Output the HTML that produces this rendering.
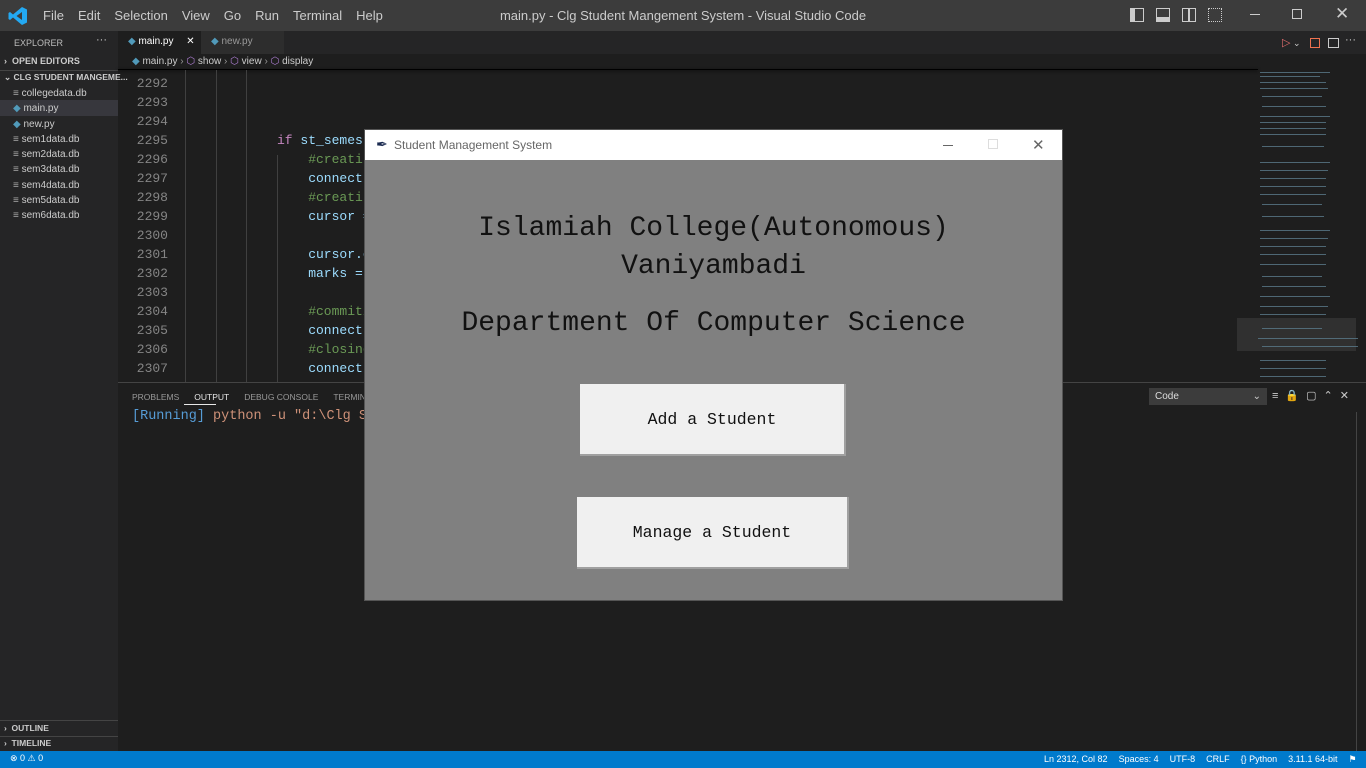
<!DOCTYPE html>
<html><head><meta charset="utf-8"><style>
*{margin:0;padding:0;box-sizing:border-box}
body{width:1366px;height:768px;overflow:hidden;background:#1e1e1e;font-family:"Liberation Sans",sans-serif;position:relative;color:#ccc}
.abs{position:absolute}
.mono{font-family:"Liberation Mono",monospace}
</style></head><body>
<!-- title bar -->
<div class="abs" style="left:0;top:0;width:1366px;height:31px;background:#3c3c3c"></div>
<svg class="abs" style="left:8px;top:6px" width="20" height="20" viewBox="0 0 20 20"><path d="M14 1 L19 3.5 V16.5 L14 19 L5 11.5 L2 14 L0.5 13 V7 L2 6 L5 8.5 Z M14 6 L8.5 10 L14 14 Z" fill="#23a9f2"/></svg>
<div class="abs" style="left:43px;top:8px;font-size:13px;color:#ccc;word-spacing:0"><span style="margin-right:14px">File</span><span style="margin-right:14px">Edit</span><span style="margin-right:14px">Selection</span><span style="margin-right:14px">View</span><span style="margin-right:14px">Go</span><span style="margin-right:14px">Run</span><span style="margin-right:14px">Terminal</span><span>Help</span></div>
<div class="abs" style="left:0;width:1366px;top:8px;text-align:center;font-size:13px;color:#ccc">main.py - Clg Student Mangement System - Visual Studio Code</div>
<div class="abs" style="left:1130px;top:8px;width:14px;height:14px;border:1.5px solid #ccc;border-left-width:5px"></div>
<div class="abs" style="left:1156px;top:8px;width:14px;height:14px;border:1.5px solid #ccc;border-bottom-width:5px"></div>
<div class="abs" style="left:1182px;top:8px;width:14px;height:14px;border:1.5px solid #ccc"></div><div class="abs" style="left:1188px;top:8px;width:1.5px;height:14px;background:#ccc"></div>
<div class="abs" style="left:1208px;top:8px;width:14px;height:14px;border:1.5px dotted #ccc"></div>
<div class="abs" style="left:1250px;top:14px;width:10px;height:1px;background:#ccc"></div>
<div class="abs" style="left:1292px;top:9px;width:10px;height:10px;border:1px solid #ccc"></div>
<div class="abs" style="left:1335px;top:4px;font-size:17px;color:#ccc">✕</div>

<!-- sidebar -->
<div class="abs" style="left:0;top:31px;width:118px;height:720px;background:#252526"></div>
<div class="abs" style="left:14px;top:38px;font-size:9px;color:#bbb">EXPLORER</div>
<div class="abs" style="left:96px;top:34px;font-size:11px;color:#ccc">···</div>
<div class="abs" style="left:4px;top:56px;font-size:9px;font-weight:bold;color:#ccc">›&nbsp; OPEN EDITORS</div>
<div class="abs" style="left:0;top:70px;width:118px;height:1px;background:#444"></div>
<div class="abs" style="left:4px;top:72px;font-size:8.5px;font-weight:bold;color:#ccc;white-space:nowrap">⌄ CLG STUDENT MANGEME...</div>
<div class="abs" style="left:0;top:100px;width:118px;height:16px;background:#37373d"></div>
<div class="abs" style="left:13px;top:86px;font-size:10px;color:#ccc;line-height:15.3px">
<div><span style="color:#aaa">≡</span> collegedata.db</div>
<div><span style="color:#519aba">◆</span> main.py</div>
<div><span style="color:#519aba">◆</span> new.py</div>
<div><span style="color:#aaa">≡</span> sem1data.db</div>
<div><span style="color:#aaa">≡</span> sem2data.db</div>
<div><span style="color:#aaa">≡</span> sem3data.db</div>
<div><span style="color:#aaa">≡</span> sem4data.db</div>
<div><span style="color:#aaa">≡</span> sem5data.db</div>
<div><span style="color:#aaa">≡</span> sem6data.db</div>
</div>
<div class="abs" style="left:0;top:720px;width:118px;height:1px;background:#444"></div>
<div class="abs" style="left:4px;top:723px;font-size:8.5px;font-weight:bold;color:#ccc">›&nbsp; OUTLINE</div>
<div class="abs" style="left:0;top:736px;width:118px;height:1px;background:#444"></div>
<div class="abs" style="left:4px;top:738px;font-size:8.5px;font-weight:bold;color:#ccc">›&nbsp; TIMELINE</div>

<!-- tabs -->
<div class="abs" style="left:118px;top:31px;width:1248px;height:23px;background:#252526"></div>
<div class="abs" style="left:118px;top:31px;width:83px;height:23px;background:#1e1e1e"></div>
<div class="abs" style="left:128px;top:36px;font-size:10px;color:#fff"><span style="color:#519aba">◆</span> main.py <span style="margin-left:10px">✕</span></div>
<div class="abs" style="left:201px;top:31px;width:83px;height:23px;background:#2d2d2d"></div>
<div class="abs" style="left:211px;top:36px;font-size:10px;color:#999"><span style="color:#519aba">◆</span> new.py</div>
<div class="abs" style="left:1282px;top:36px;font-size:11px;color:#e06c6c">▷<span style="color:#ccc;font-size:9px"> ⌄</span></div>
<div class="abs" style="left:1310px;top:38px;width:10px;height:10px;border:1.5px solid #f0724f"></div>
<div class="abs" style="left:1328px;top:38px;width:11px;height:10px;border:1.5px solid #ccc"></div>
<div class="abs" style="left:1345px;top:34px;font-size:11px;color:#ccc">···</div>
<div class="abs" style="left:132px;top:56px;font-size:10px;color:#ccc"><span style="color:#519aba">◆</span> main.py <span style="color:#999">›</span> <span style="color:#b180d7">⬡</span> show <span style="color:#999">›</span> <span style="color:#b180d7">⬡</span> view <span style="color:#999">›</span> <span style="color:#b180d7">⬡</span> display</div>

<!-- code -->
<div class="abs" style="left:118px;top:70px;width:1140px;height:313px;overflow:hidden">
<div class="abs mono" style="left:220px;top:-15px;font-size:13px;color:#9cdcfe;white-space:pre">student_records.grid(row=1,column=0,columnspan=3,padx=5,pady=5)</div>
</div>
<div class="abs" style="left:118px;top:69px;width:1140px;height:1px;background:#000;box-shadow:0 1px 3px #000"></div>
<div class="abs mono" style="left:120px;top:74px;width:48px;text-align:right;font-size:13px;line-height:19px;color:#858585">
<div>2292</div><div>2293</div><div>2294</div><div>2295</div><div>2296</div><div>2297</div><div>2298</div><div>2299</div><div>2300</div><div>2301</div><div>2302</div><div>2303</div><div>2304</div><div>2305</div><div>2306</div><div>2307</div></div>
<div class="abs" style="left:185px;top:70px;width:1px;height:313px;background:#404040"></div>
<div class="abs" style="left:216px;top:70px;width:1px;height:313px;background:#404040"></div>
<div class="abs" style="left:246px;top:70px;width:1px;height:313px;background:#404040"></div>
<div class="abs" style="left:277px;top:155px;width:1px;height:228px;background:#404040"></div>
<div class="abs mono" style="left:277px;top:131px;font-size:13px;line-height:19px;white-space:pre;color:#9cdcfe"><span style="color:#c586c0">if</span> st_semest
<span style="color:#6a9955">    #creatin</span>
    connect
<span style="color:#6a9955">    #creatin</span>
    cursor =

    cursor.e
    marks =

<span style="color:#6a9955">    #commiti</span>
    connect.
<span style="color:#6a9955">    #closing</span>
    connect.</div>

<!-- minimap -->
<div class="abs" style="left:1237px;top:318px;width:119px;height:33px;background:#303030"></div>
<svg class="abs" style="left:1258px;top:70px" width="100" height="312">
<g fill="#5a7a8a" opacity=".8">
<rect x="2" y="2" width="70" height="1"/><rect x="2" y="6" width="60" height="1"/><rect x="2" y="12" width="66" height="1"/><rect x="2" y="18" width="68" height="1"/><rect x="4" y="26" width="60" height="1"/><rect x="4" y="36" width="64" height="1"/><rect x="2" y="46" width="70" height="1"/><rect x="2" y="52" width="66" height="1"/><rect x="2" y="58" width="66" height="1"/><rect x="2" y="64" width="66" height="1"/><rect x="4" y="76" width="62" height="1"/><rect x="2" y="92" width="70" height="1"/><rect x="2" y="100" width="68" height="1"/><rect x="2" y="108" width="66" height="1"/><rect x="2" y="116" width="66" height="1"/><rect x="2" y="124" width="66" height="1"/><rect x="4" y="134" width="60" height="1"/><rect x="4" y="146" width="62" height="1"/><rect x="2" y="160" width="70" height="1"/><rect x="2" y="168" width="68" height="1"/><rect x="2" y="176" width="66" height="1"/><rect x="2" y="184" width="66" height="1"/><rect x="2" y="194" width="66" height="1"/><rect x="4" y="206" width="60" height="1"/><rect x="4" y="216" width="64" height="1"/><rect x="2" y="226" width="70" height="1"/><rect x="2" y="236" width="68" height="1"/><rect x="2" y="244" width="66" height="1"/><rect x="4" y="258" width="60" height="1"/><rect x="4" y="268" width="100" height="1"/><rect x="4" y="276" width="100" height="1"/><rect x="0" y="268" width="60" height="1"/><rect x="2" y="290" width="66" height="1"/><rect x="2" y="298" width="66" height="1"/><rect x="2" y="306" width="66" height="1"/>
</g></svg>

<!-- panel -->
<div class="abs" style="left:118px;top:382px;width:1248px;height:1px;background:#444"></div>
<div class="abs" style="left:132px;top:392px;font-size:8.5px;color:#999;white-space:nowrap"><span>PROBLEMS</span><span style="margin-left:15px;color:#e7e7e7">OUTPUT</span><span style="margin-left:15px">DEBUG CONSOLE</span><span style="margin-left:15px">TERMINAL</span></div>
<div class="abs" style="left:184px;top:404px;width:32px;height:1px;background:#e7e7e7"></div>
<div class="abs mono" style="left:132px;top:409px;font-size:13.5px;white-space:pre"><span style="color:#569cd6">[Running]</span> <span style="color:#ce9178">python -u "d:\Clg Stu</span></div>
<div class="abs" style="left:1149px;top:388px;width:118px;height:17px;background:#3c3c3c;font-size:10px;color:#ddd;padding:3px 6px">Code<span style="float:right;color:#ccc">⌄</span></div>
<div class="abs" style="left:1272px;top:389px;font-size:11px;color:#ccc;letter-spacing:7px">≡🔒▢⌃✕</div>
<div class="abs" style="left:1356px;top:412px;width:10px;height:339px;border-left:1px solid #444"></div>

<!-- status bar -->
<div class="abs" style="left:0;top:751px;width:1366px;height:17px;background:#007acc"></div>
<div class="abs" style="left:10px;top:753px;font-size:9px;color:#fff">⊗ 0 ⚠ 0</div>
<div class="abs" style="left:1044px;top:754px;font-size:9px;color:#fff;white-space:nowrap"><span>Ln 2312, Col 82</span><span style="margin-left:11px">Spaces: 4</span><span style="margin-left:11px">UTF-8</span><span style="margin-left:11px">CRLF</span><span style="margin-left:11px">{} Python</span><span style="margin-left:11px">3.11.1 64-bit</span><span style="margin-left:11px">⚑</span><span style="margin-left:11px">🔔</span></div>

<!-- Tk window -->
<div class="abs" style="left:364px;top:129px;width:699px;height:472px;background:#555"></div>
<div class="abs" style="left:365px;top:130px;width:697px;height:30px;background:#fff"></div>
<div class="abs" style="left:376px;top:136px;font-size:14px;color:#1a2a50">✒</div>
<div class="abs" style="left:394px;top:138px;font-size:12px;color:#666">Student Management System</div>
<div class="abs" style="left:943px;top:145px;width:10px;height:1px;background:#666"></div>
<div class="abs" style="left:988px;top:139px;width:10px;height:10px;border:1px solid #ddd"></div>
<div class="abs" style="left:1032px;top:136px;font-size:15px;color:#666">✕</div>
<div class="abs" style="left:365px;top:160px;width:697px;height:440px;background:#808080"></div>
<div class="abs mono" style="left:365px;width:697px;top:210px;text-align:center;font-size:28px;line-height:38px;color:#111;white-space:pre">Islamiah College(Autonomous)
Vaniyambadi</div>
<div class="abs mono" style="left:365px;width:697px;top:306px;text-align:center;font-size:28px;line-height:36px;color:#111">Department Of Computer Science</div>
<div class="abs mono" style="left:580px;top:384px;width:266px;height:72px;background:#f0f0f0;border-right:2px solid #a0a0a0;border-bottom:2px solid #a0a0a0;text-align:center;line-height:71px;font-size:16.5px;color:#111">Add a Student</div>
<div class="abs mono" style="left:577px;top:497px;width:272px;height:72px;background:#f0f0f0;border-right:2px solid #a0a0a0;border-bottom:2px solid #a0a0a0;text-align:center;line-height:71px;font-size:16.5px;color:#111">Manage a Student</div>
</body></html>
